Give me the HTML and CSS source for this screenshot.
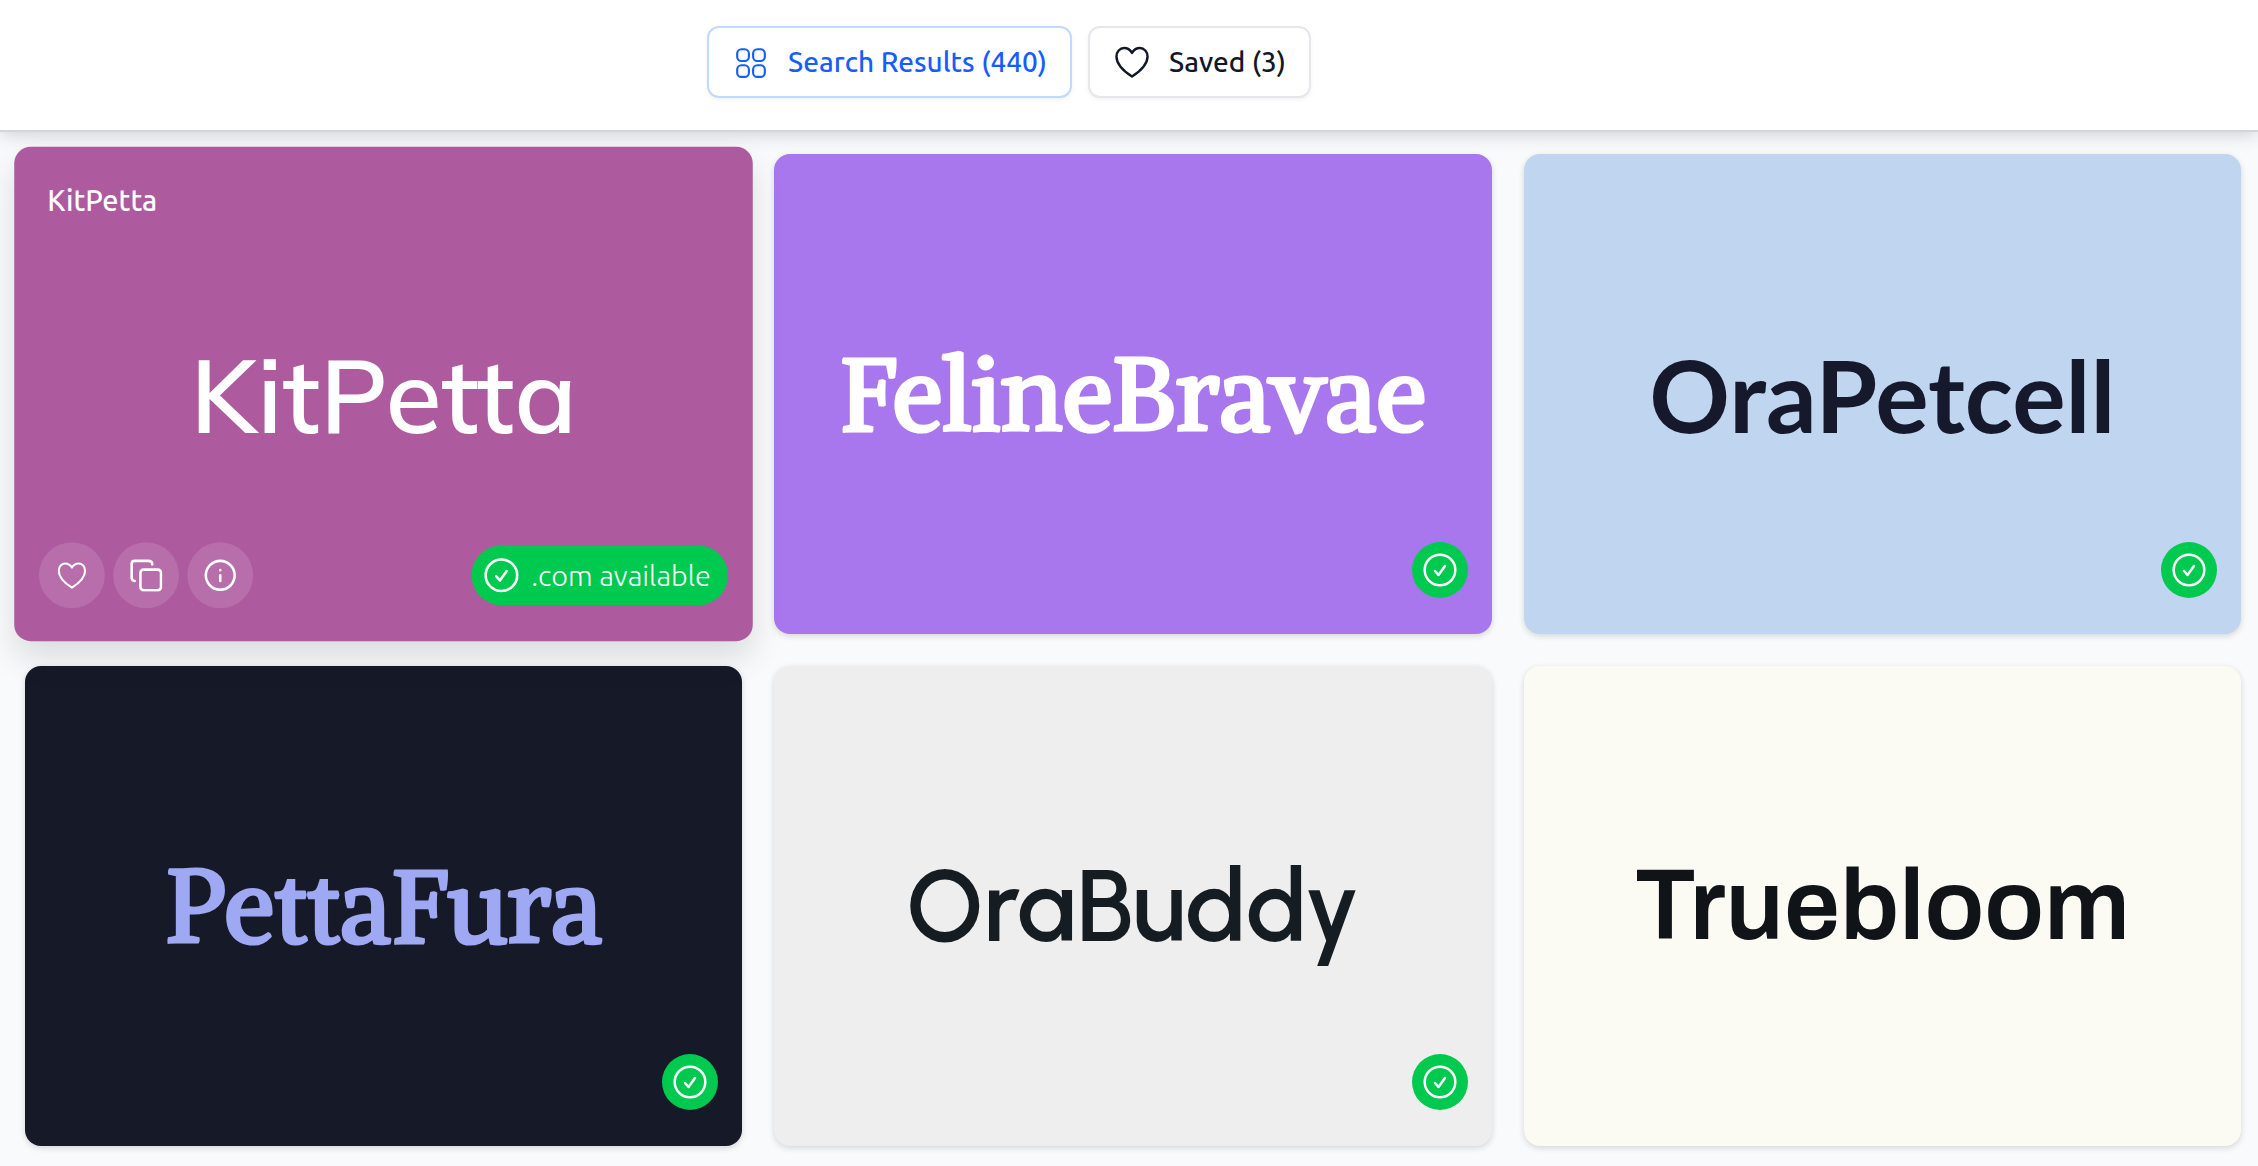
FILE: index.html
```html
<!DOCTYPE html>
<html lang="en">
<head>
    <meta charset="UTF-8">
    <meta name="viewport" content="width=device-width, initial-scale=1.0">
    <title>Business Names</title>
    <link rel="stylesheet" href="styles.css">
</head>
<body>

    <!-- Shared icons -->
    <svg class="icon-defs" aria-hidden="true">
        <symbol id="icon-check" viewBox="0 0 34 34">
            <circle cx="17" cy="17" r="15.3" />
            <path d="M12 18l3.500 4L22 13" />
        </symbol>
        <symbol id="icon-heart" viewBox="0 0 28 28">
            <path d="M14 26C7.500 21.800 1.200 16.500 1.200 9.500 1.200 5.500 4 2.500 7.500 2.500 10.500 2.500 12.500 4 14 6.500 15.500 4 17.500 2.500 20.500 2.500 24 2.500 26.800 5.500 26.800 9.500 26.800 16.500 20.500 21.800 14 26Z" />
        </symbol>
    </svg>

    <!-- Tabs -->
    <header class="toolbar">
        <button class="tab active" type="button">
            <svg class="tab-icon" viewBox="0 0 32 32">
                <rect x="3" y="4" width="11" height="11" rx="4" />
                <rect x="18" y="4" width="11" height="11" rx="4" />
                <rect x="3" y="19" width="11" height="11" rx="4" />
                <rect x="18" y="19" width="11" height="11" rx="4" />
            </svg>
            <span>Search Results (440)</span>
        </button>
        <button class="tab" type="button">
            <svg class="tab-icon"><use href="#icon-heart" /></svg>
            <span>Saved (3)</span>
        </button>
    </header>

    <!-- Name cards -->
    <main class="names">
        <article class="card card-plum hovered">
            <p class="card-label">KitPetta</p>
            <h2 class="logo font-kit">KitPetta</h2>
            <div class="card-footer">
                <div class="actions">
                    <button class="action" type="button" aria-label="Save"><svg class="action-heart"><use href="#icon-heart" /></svg></button>
                    <button class="action" type="button" aria-label="Copy">
                        <svg viewBox="0 0 32 32">
                            <rect x="10.500" y="10.500" width="20" height="20" rx="3" />
                            <path d="M5 21.500C3 21.500 2 20 2 18V5C2 3 3 2 5 2h13c2.500 0 4 1 4 3.500" />
                        </svg>
                    </button>
                    <button class="action" type="button" aria-label="Details">
                        <svg viewBox="0 0 32 32">
                            <circle cx="16" cy="16" r="14" />
                            <path d="M16 16v5.500M16 11v.1" />
                        </svg>
                    </button>
                </div>
                <span class="available"><svg><use href="#icon-check" /></svg>.com available</span>
            </div>
        </article>

        <article class="card card-violet">
            <h2 class="logo font-serif">FelineBravae</h2>
            <div class="card-footer"><span class="badge"><svg><use href="#icon-check" /></svg></span></div>
        </article>

        <article class="card card-sky">
            <h2 class="logo font-ora">OraPetcell</h2>
            <div class="card-footer"><span class="badge"><svg><use href="#icon-check" /></svg></span></div>
        </article>

        <article class="card card-navy">
            <h2 class="logo font-serif">PettaFura</h2>
            <div class="card-footer"><span class="badge"><svg><use href="#icon-check" /></svg></span></div>
        </article>

        <article class="card card-grey">
            <h2 class="logo font-buddy">OraBuddy</h2>
            <div class="card-footer"><span class="badge"><svg><use href="#icon-check" /></svg></span></div>
        </article>

        <article class="card card-cream">
            <h2 class="logo font-bloom">Truebloom</h2>
        </article>
    </main>

</body>
</html>
```

FILE: styles.css
```css
* {
    margin: 0;
    padding: 0;
    box-sizing: border-box;
}

body {
    min-height: 100vh;
    background-color: #f9fafb;
    font-family: Ubuntu, "Noto Sans", sans-serif;
    font-size: 28px;
    line-height: 40px;
    color: #101828;
}

button {
    font: inherit;
    color: inherit;
    cursor: pointer;
}

svg {
    fill: none;
    stroke: currentColor;
    stroke-width: 2;
    stroke-linecap: round;
    stroke-linejoin: round;
}

.icon-defs {
    display: none;
}

/* Tabs */
.toolbar {
    display: flex;
    justify-content: center;
    gap: 16px;
    padding: 26px 240px 32px 0;
    background-color: #fff;
    border-bottom: 2px solid #d1d5dc;
    box-shadow: 0 4px 16px rgba(0, 0, 0, 0.15);
}

.tab {
    display: flex;
    align-items: center;
    gap: 20px;
    height: 72px;
    padding: 0 23px 0 25px;
    background-color: #fff;
    border: 2px solid #e5e7eb;
    border-radius: 12px;
    box-shadow: 0 2px 4px rgba(0, 0, 0, 0.05);
    font-weight: 500;
}

.tab.active {
    border-color: #bedbff;
    color: #155dfc;
}

.tab-icon {
    width: 34px;
    height: 34px;
}

/* Grid of cards */
.names {
    display: grid;
    grid-template-columns: repeat(3, 1fr);
    gap: 32px;
    padding: 22px 17px 20px 25px;
}

.card {
    display: grid;
    height: 480px;
    border-radius: 16px;
    box-shadow: 0 2px 6px rgba(0, 0, 0, 0.15);
}

.card > * {
    grid-area: 1 / 1;
}

.card.hovered {
    transform: scale(1.03);
    box-shadow: 0 16px 32px rgba(0, 0, 0, 0.12);
}

.card-label {
    padding: 32px;
    font-weight: 500;
}

.logo {
    place-self: center;
    font-size: 100px;
    line-height: 120px;
    font-weight: 600;
}

.card-footer {
    align-self: end;
    display: flex;
    align-items: center;
    justify-content: flex-end;
    height: 64px;
    margin: 0 24px 32px;
}

.actions {
    display: flex;
    gap: 8px;
    margin-right: auto;
}

.action {
    display: flex;
    align-items: center;
    justify-content: center;
    width: 64px;
    height: 64px;
    border: none;
    border-radius: 50%;
    background-color: rgba(255, 255, 255, 0.12);
}

.action svg {
    width: 32px;
    height: 32px;
    stroke-width: 2.5;
}

.action .action-heart {
    width: 28px;
    height: 28px;
    stroke-width: 2;
}

.badge,
.available {
    display: flex;
    align-items: center;
    justify-content: center;
    background-color: #00c950;
    color: #fff;
}

.badge {
    width: 56px;
    height: 56px;
    border-radius: 50%;
}

.badge svg,
.available svg {
    width: 34px;
    height: 34px;
    stroke-width: 2.5;
}

.available {
    gap: 12px;
    height: 58px;
    padding: 0 17px 0 12px;
    border-radius: 29px;
    font-weight: 300;
}

/* Card colours */
.card-plum { background-color: #ad5a9f; color: #fff; }
.card-violet { background-color: #a877ee; color: #fff; }
.card-sky { background-color: #c0d5f0; color: #15192b; }
.card-navy { background-color: #161928; color: #9fa8f2; }
.card-grey { background-color: #eee; color: #151c22; }
.card-cream { background-color: #fbfbf3; color: #101418; }

/* Card fonts */
.font-kit { font-family: Mulish, Lato, sans-serif; }
.font-serif { font-family: Alike, "Liberation Serif", serif; font-size: 102px; font-weight: 700; }
.font-ora { font-family: Lato, sans-serif; font-weight: 700; }
.font-buddy { font-family: Urbanist, Lato, sans-serif; }
.font-bloom { font-family: Archivo, "Liberation Sans", sans-serif; }
```
